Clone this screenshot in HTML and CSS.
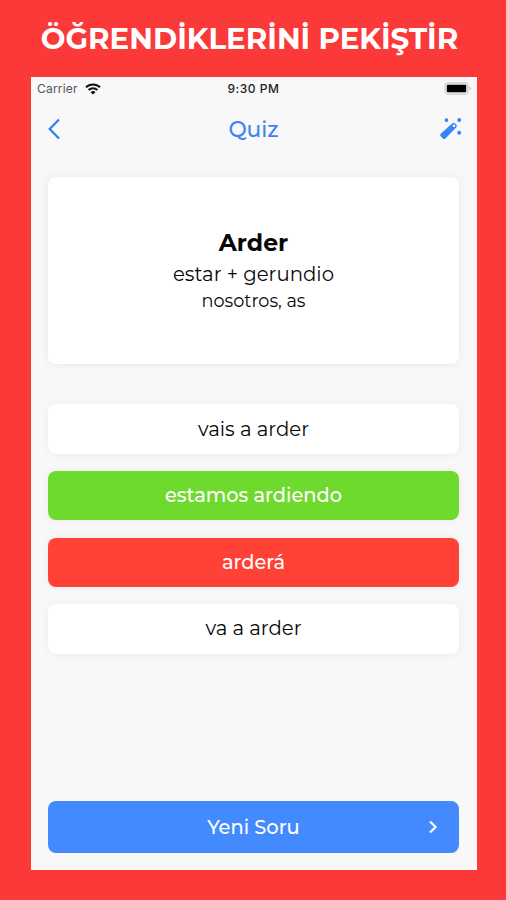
FILE: index.html
```html
<!DOCTYPE html>
<html lang="tr">
<head>
<meta charset="utf-8">
<title>Quiz</title>
<link rel="stylesheet" href="styles.css">
</head>
<body>
<h1 class="headline">ÖĞRENDİKLERİNİ PEKİŞTİR</h1>
<main class="screen">
  <div class="status">
    <div class="carrier"><span>Carrier</span>
      <svg width="16" height="12" viewBox="0 0 16 12" fill="none" stroke="#111" stroke-width="2"><path d="M1 4.3a10 10 0 0 1 14 0M3.6 7a6.3 6.3 0 0 1 8.8 0"/><path d="M8 11.5 5.6 9.2a3.4 3.4 0 0 1 4.8 0z" fill="#111" stroke="none"/></svg>
    </div>
    <span class="time">9:30 PM</span>
    <svg class="battery" width="28" height="13" viewBox="0 0 28 13"><rect x="1" y=".8" width="23" height="11.4" rx="3.2" fill="#eee" stroke="#ccc" stroke-width="1.2"/><rect x="2.8" y="2.7" width="19.4" height="7.6" rx="1" fill="#000"/><path d="M25.4 4.4v4q1.7-.6 1.7-2t-1.7-2" fill="#ccc"/></svg>
  </div>
  <header class="nav">
    <svg width="14" height="22" viewBox="0 0 14 22" fill="none" stroke="#2b7df5" stroke-width="2.2"><path d="M12 1.5 2.7 11l9.3 9.5"/></svg>
    <h2>Quiz</h2>
    <svg width="24" height="24" viewBox="0 0 24 24" fill="#3a83f8"><path d="M13.2 6.5q1.5-1.4 3 0l1 1q1.4 1.5 0 3L6.4 21.5q-1.2 1.1-2.4 0l-2.3-2.3q-1.1-1.2 0-2.4z"/><circle cx="15" cy="8.7" r="1.3" fill="#f9f9f9"/><circle cx="7.5" cy="3.1" r="1.9"/><circle cx="20.2" cy="3.1" r="2"/><circle cx="20.2" cy="15.7" r="2"/></svg>
  </header>
  <section class="card">
    <h3>Arder</h3>
    <p class="tense">estar + gerundio</p>
    <p class="person">nosotros, as</p>
  </section>
  <div class="answers">
    <button class="answer">vais a arder</button>
    <button class="answer correct">estamos ardiendo</button>
    <button class="answer wrong">arderá</button>
    <button class="answer">va a arder</button>
  </div>
  <button class="next"><span>Yeni Soru</span>
    <svg width="10" height="14" viewBox="0 0 10 14" fill="none" stroke="#fff" stroke-width="2.1"><path d="m2 1.5 5.6 5.5L2 12.5"/></svg>
  </button>
</main>
</body>
</html>
```
FILE: styles.css
```css
* { box-sizing: border-box; }
body {
  margin: 0;
  height: 900px;
  overflow: hidden;
  background: #fc3939;
  font-family: Montserrat, Inter, sans-serif;
  color: #080808;
}
h1, h2, h3, p { margin: 0; white-space: nowrap; }
button { border: 0; padding: 0; font: inherit; color: inherit; white-space: nowrap; }
.headline {
  height: 77px;
  padding-top: 19px;
  text-align: center;
  font-size: 29.3px;
  font-weight: 700;
  line-height: 40px;
  color: #fff;
  margin-left: -7px;
}
.screen {
  width: 446px;
  height: 793px;
  margin-left: 30.5px;
  padding: 0 17.5px;
  background: #f8f8f8;
  display: flex;
  flex-direction: column;
}
.status {
  display: grid;
  grid-template-columns: 1fr auto 1fr;
  align-items: center;
  height: 23px;
  margin: 0 -11px;
  font-family: Inter, sans-serif;
  font-size: 12px;
}
.carrier { display: flex; align-items: center; gap: 7px; color: #555; letter-spacing: .2px; }
.time { font-weight: 500; color: #222; letter-spacing: .55px; }
.battery { justify-self: end; margin-right: -2px; }
.nav { height: 58px; padding-bottom: 1px; display: flex; align-items: center; justify-content: space-between; margin: 0 -4px 0 -1px; }
.nav h2 { font-size: 21.7px; font-weight: 500; color: #3b83f7; padding-left: 7px; }
.card {
  height: 187px;
  margin-top: 19px;
  padding-top: 48px;
  border-radius: 8px;
  background: #fff;
  text-align: center;
  box-shadow: 0 0 8px rgba(0, 0, 0, .07);
}
.card h3 { font-size: 23.6px; font-weight: 700; line-height: 36px; }
.tense { font-size: 19.7px; line-height: 26px; }
.person { font-size: 17.7px; line-height: 27px; }
.answers { margin-top: 40px; display: grid; grid-template-rows: 50px 49px 49px 50px; gap: 17.3px; }
.answer {
  padding-bottom: 1px;
  border-radius: 8px;
  background: #fff;
  font-size: 19.7px;
  box-shadow: 0 0 8px rgba(0, 0, 0, .06);
}
.correct, .wrong { color: #fff; font-size: 19.4px; font-weight: 500; }
.correct { background: #6eda2d; }
.wrong { background: #ff4136; }
.next {
  height: 52px;
  margin-top: auto;
  margin-bottom: 17px;
  padding: 0 21px 0 31px;
  border-radius: 8px;
  background: #448aff;
  color: #fff;
  font-size: 19.4px;
  font-weight: 500;
  display: grid;
  grid-template-columns: 1fr 10px;
  align-items: center;
}
```
